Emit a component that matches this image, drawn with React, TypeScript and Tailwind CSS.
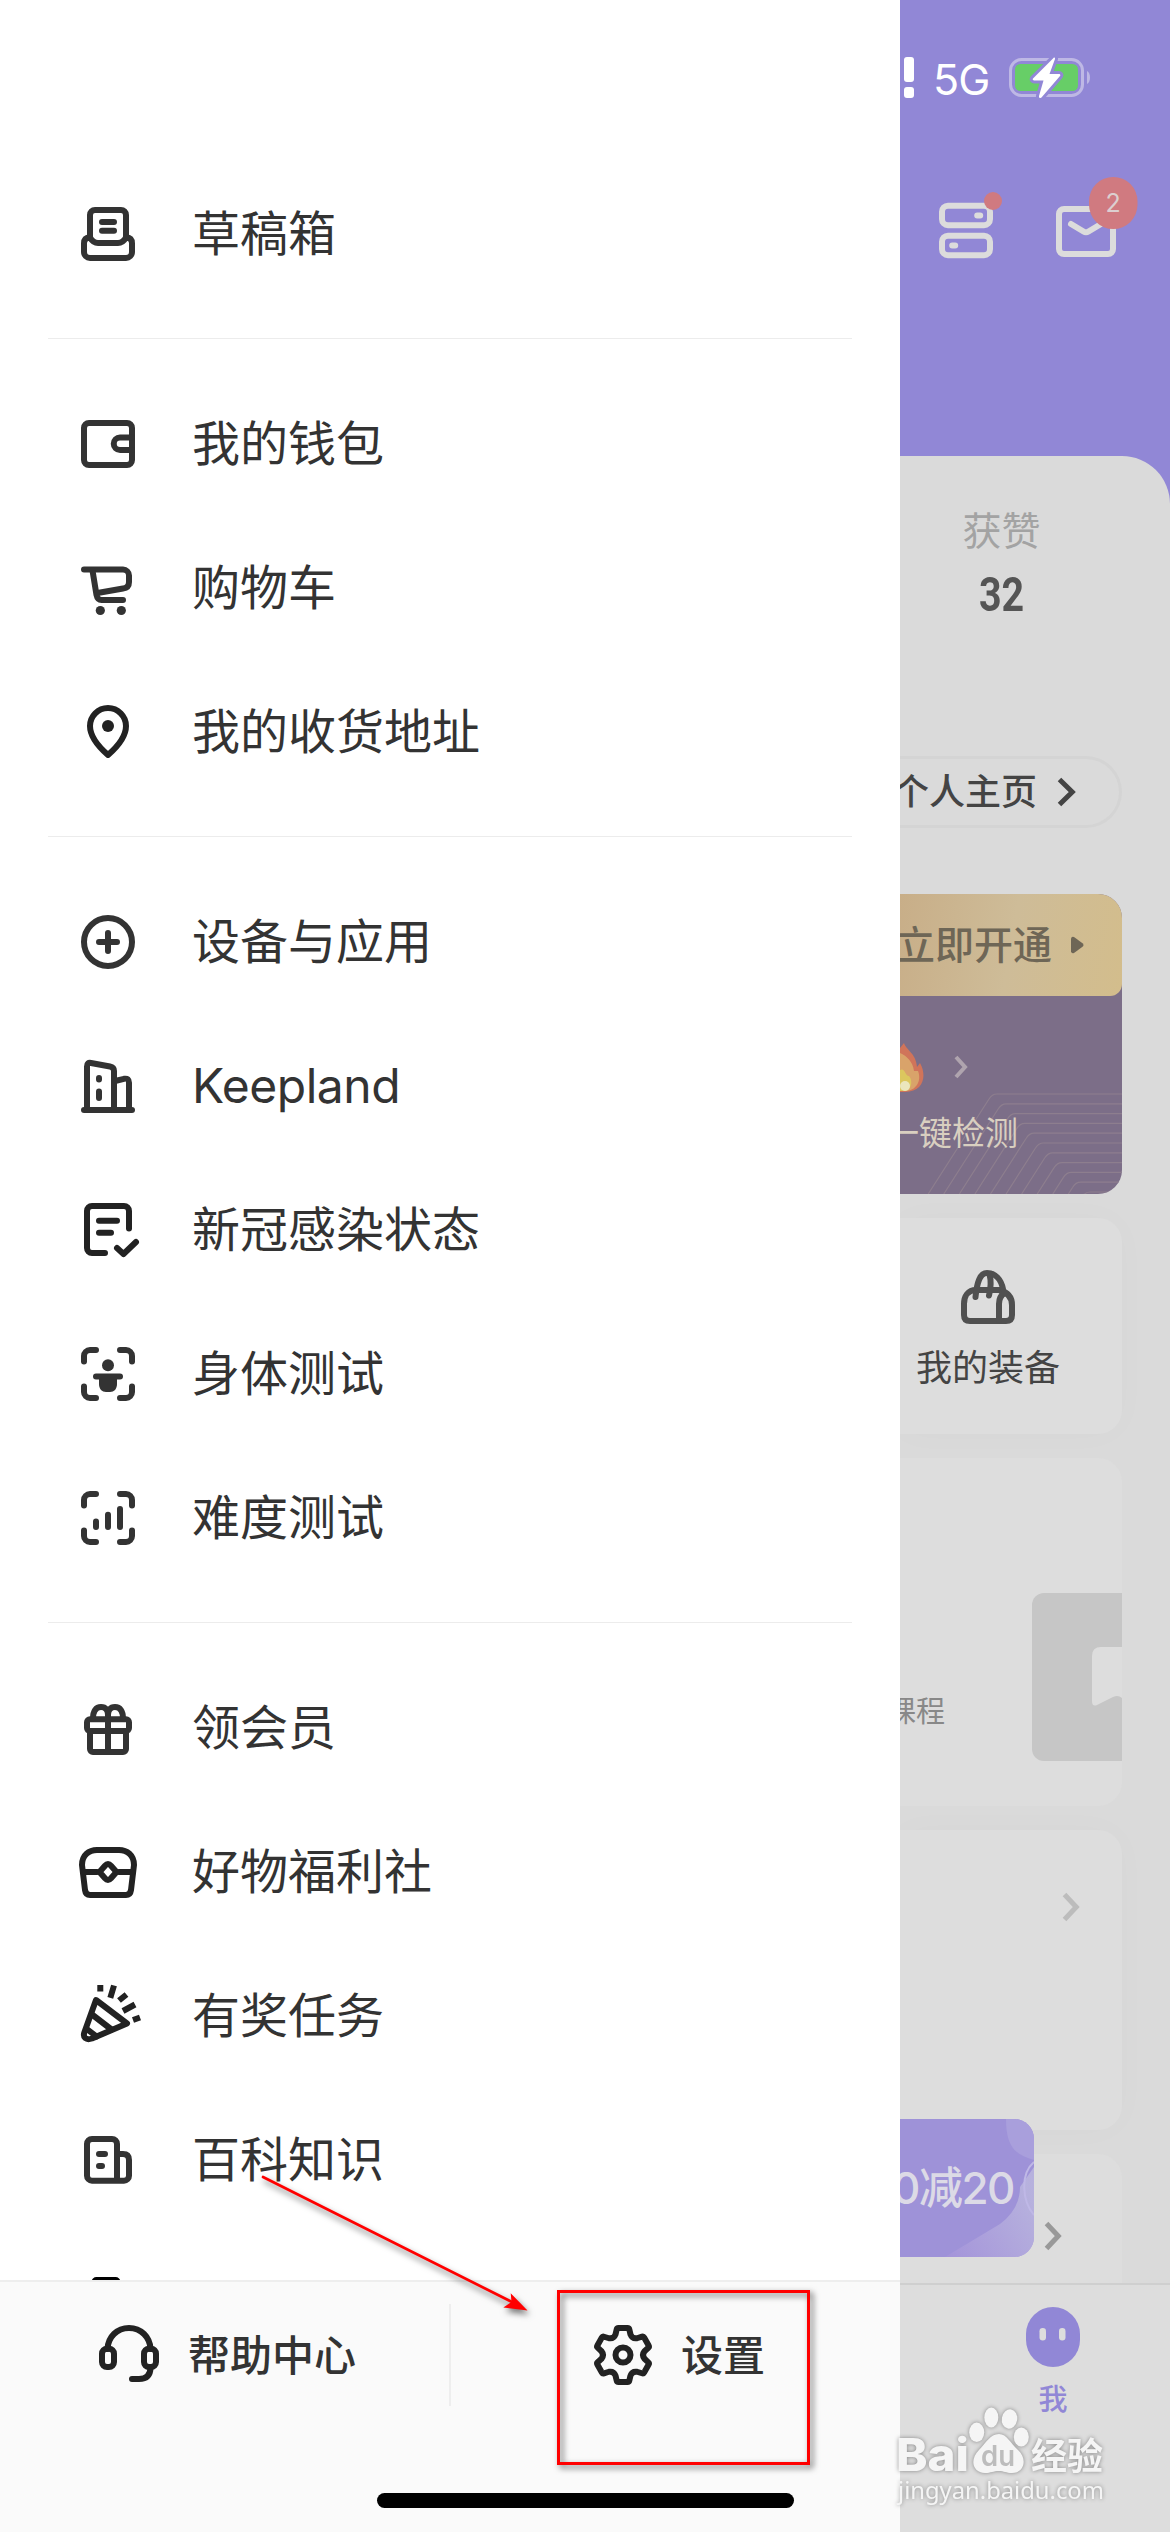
import React from "react";

type IconProps = { children: React.ReactNode; color?: string };

function Icon({ children, color = "#333333" }: IconProps) {
  return (
    <svg
      viewBox="0 0 72 72"
      className="size-[72px] shrink-0"
      fill="none"
      stroke={color}
      strokeWidth={6}
      strokeLinecap="round"
      strokeLinejoin="round"
    >
      {children}
    </svg>
  );
}

const DraftIcon = () => (
  <Icon>
    <path d="M18 40V17a5 5 0 0 1 5-5h26a5 5 0 0 1 5 5v23" />
    <path d="M18 39.500c-4 0-6 2-6 6V54a6 6 0 0 0 6 6h36a6 6 0 0 0 6-6v-8.500c0-4-2-6-6-6-2 3.500-5 5.500-8 5.500H26c-3 0-6-2-8-5.500z" />
    <path d="M30 24h12M30 32.800h12" />
  </Icon>
);

const WalletIcon = () => (
  <Icon>
    <rect x="12" y="15" width="48" height="42" rx="5" />
    <path d="M60 29.500H48a6.200 6.200 0 0 0 0 12.500h12" />
  </Icon>
);

const CartIcon = () => (
  <Icon>
    <path d="M12 17.500h39a6 6 0 0 1 6 6V30c0 4-2 6-6 6.500L25.500 41" />
    <path d="M20.500 18.500l4 24.500c.7 3.500 2 5 5 5H51" />
    <g fill="#333333" stroke="none">
      <circle cx="28.300" cy="58.500" r="4.600" />
      <circle cx="49.300" cy="58.500" r="4.600" />
    </g>
  </Icon>
);

const PinIcon = () => (
  <Icon color="#222222">
    <path d="M36 59C28 52 18 42 18 30a18 18 0 0 1 36 0c0 12-10 22-18 29z" />
    <circle cx="36" cy="30" r="6" fill="#222222" stroke="none" />
  </Icon>
);

const PlusIcon = () => (
  <Icon>
    <circle cx="36" cy="36" r="24" />
    <path d="M27 36h18M36 27v18" />
  </Icon>
);

const BuildingIcon = () => (
  <Icon>
    <path d="M12 60h48" />
    <path d="M15 60V16.500c0-3 1.500-4 4-3.500l19 3.500c2.700.5 4 2 4 4.500v39" />
    <path d="M43 31l9-2.200c3.500-.6 5 .7 5 4V60" />
    <path d="M27 28v1.500M27 41.500v6.500" />
  </Icon>
);

const ChecklistIcon = () => (
  <Icon color="#222222">
    <path d="M57 34.500V17a5 5 0 0 0-5-5H20a5 5 0 0 0-5 5v37a5 5 0 0 0 5 5h13" />
    <path d="M27 26.700h18M27 38.700h12M45 54l6.500 6L64 48" />
  </Icon>
);

const Brackets = () => (
  <path d="M12 23.500V18a6 6 0 0 1 6-6h6M48 12h6a6 6 0 0 1 6 6v5.500M60 48.500V54a6 6 0 0 1-6 6h-6M24 60h-6a6 6 0 0 1-6-6v-5.500" />
);

const BodyIcon = () => (
  <Icon>
    <Brackets />
    <path d="M24 38.500h24" />
    <path d="M27 39h18v7c0 5-3 8-7 8h-4c-4 0-7-3-7-8z" fill="#333333" stroke="none" />
    <circle cx="36" cy="27.200" r="6" fill="#333333" stroke="none" />
  </Icon>
);

const BarsIcon = () => (
  <Icon>
    <Brackets />
    <path d="M24 39.500V45M36 32.700V45M48 27v18" />
  </Icon>
);

const GiftIcon = () => (
  <Icon>
    <rect x="15" y="27.300" width="42" height="11.700" rx="3" />
    <path d="M18 40v17a3 3 0 0 0 3 3h30a3 3 0 0 0 3-3V40M36 22v38" />
    <path d="M21 26.500C21 19 24 15 29 15s7 3.500 7 8c0-4.500 2-8 7-8s8 4 8 11.500" />
  </Icon>
);

const ChestIcon = () => (
  <Icon color="#222222">
    <path d="M10 29c0-10 7-15 15-15h22c8 0 15 5 15 15l-3 25c-.5 3.500-2 5-5 5H18c-3 0-4.500-1.500-5-5z" />
    <path d="M11 36h14M47 36h14" />
    <path d="M27.500 36l5.500-6.300c2-2.200 4-2.200 6 0l5.500 6.300-5.500 6.300c-2 2.200-4 2.200-6 0z" />
  </Icon>
);

const PartyIcon = () => (
  <Icon color="#222222">
    <path d="M24 20l31 23.500L20 58.500c-6 2-9.500-1-7.500-6.500z" />
    <path d="M20 34.500l19.500 15M15.500 49.500l9 7" />
    <path
      strokeLinecap="butt"
      d="M28.300 5v6.500M38.300 17.800L42 5.500M47 20.500l7.500-6M51 31l12-6.500M61 40l7-2.500"
    />
  </Icon>
);

const NewsIcon = () => (
  <Icon>
    <path d="M45 56.700V20a5 5 0 0 0-5-5H20a5 5 0 0 0-5 5v31.700a5 5 0 0 0 5 5h32a5 5 0 0 0 5-5V36c0-4-2-6-6-6h-5" />
    <path d="M27 30h6M27 42h3" />
  </Icon>
);

const CutIcon = () => (
  <Icon color="#000000">
    <rect x="22.500" y="12" width="23" height="46" rx="2" />
  </Icon>
);

const HeadsetIcon = () => (
  <Icon color="#222222">
    <rect x="9" y="29.700" width="12" height="18.300" rx="5" />
    <rect x="51" y="29.700" width="12" height="18.300" rx="5" />
    <path d="M14.500 30C15 18 24 9 36 9s21 9 21.500 21M57.500 48c0 8-4 12-11.500 12h-7" />
  </Icon>
);

/* Six identical teeth, each rotated 60° around the icon's centre. */
function gearPath() {
  let d = "";
  for (let k = 0; k < 6; k++) {
    const t = (k * Math.PI) / 3;
    const p = (x: number, y: number) =>
      `${(36 + x * Math.cos(t) + y * Math.sin(t)).toFixed(2)} ${(36 + x * Math.sin(t) - y * Math.cos(t)).toFixed(2)}`;
    d += `${k === 0 ? "M" : "L"}${p(-7.5, 20.5)}L${p(-6.3, 25.6)}Q${p(-6, 27)} ${p(-4.5, 27)}L${p(4.5, 27)}Q${p(6, 27)} ${p(6.3, 25.6)}L${p(7.5, 20.5)}Q${p(9.25, 16)} ${p(14, 16.75)}`;
  }
  return d + "Z";
}

const GearIcon = () => (
  <Icon color="#222222">
    <path d={gearPath()} />
    <circle cx="36" cy="36" r="7.500" />
  </Icon>
);

const groups = [
  [{ label: "草稿箱", icon: <DraftIcon /> }],
  [
    { label: "我的钱包", icon: <WalletIcon /> },
    { label: "购物车", icon: <CartIcon /> },
    { label: "我的收货地址", icon: <PinIcon /> },
  ],
  [
    { label: "设备与应用", icon: <PlusIcon /> },
    { label: "Keepland", icon: <BuildingIcon /> },
    { label: "新冠感染状态", icon: <ChecklistIcon /> },
    { label: "身体测试", icon: <BodyIcon /> },
    { label: "难度测试", icon: <BarsIcon /> },
  ],
  [
    { label: "领会员", icon: <GiftIcon /> },
    { label: "好物福利社", icon: <ChestIcon /> },
    { label: "有奖任务", icon: <PartyIcon /> },
    { label: "百科知识", icon: <NewsIcon /> },
    { label: "", icon: <CutIcon /> },
  ],
];

function Drawer() {
  return (
    <aside className="flex h-full w-[900px] shrink-0 flex-col bg-white">
      <nav className="h-[2280px] overflow-hidden pt-[162px]">
        {groups.map((items, g) => (
          <section key={g}>
            {g > 0 && <div className="mx-12 mt-8 mb-[33px] h-px bg-[#ececec]" />}
            {items.map((item, i) => (
              <div key={i} className="flex h-36 items-center gap-12 pl-[72px]">
                {item.icon}
                <span
                  className={
                    item.label === "Keepland"
                      ? "text-[48px] leading-[72px] tracking-[-0.5px] text-[#333333]"
                      : "text-[48px] leading-[72px] text-[#333333]"
                  }
                >
                  {item.label}
                </span>
              </div>
            ))}
          </section>
        ))}
      </nav>
      <footer className="flex h-[252px] items-start border-t-2 border-[#eeeeee] bg-[#fafafa] pt-[22px] text-[42px] font-medium text-[#333333]">
        <div className="flex h-[102px] w-[449px] items-center gap-[23px] pl-[93px]">
          <HeadsetIcon />
          <span>帮助中心</span>
        </div>
        <div className="h-[102px] w-0.5 bg-[#eeeeee]" />
        <div className="flex h-[102px] flex-1 items-center gap-[22px] pl-[136px]">
          <GearIcon />
          <span>设置</span>
        </div>
      </footer>
    </aside>
  );
}

function Chevron({ className, w, h, sw }: { className: string; w: number; h: number; sw: number }) {
  return (
    <svg width={w} height={h} viewBox={`0 0 ${w} ${h}`} className={className} fill="none" stroke="currentColor" strokeWidth={sw}>
      <path d={`M${sw / 2} ${sw / 2}L${w - sw * 0.75} ${h / 2}L${sw / 2} ${h - sw / 2}`} />
    </svg>
  );
}

function TopArea() {
  return (
    <header className="h-[456px] pt-[57px] text-white">
      <div className="flex h-[41px] items-center pl-1">
        <div className="flex flex-col gap-[5px]">
          <div className="h-[25px] w-2.5 rounded-[3px] bg-white" />
          <div className="h-[11px] w-2.5 rounded-[3px] bg-white" />
        </div>
        <span className="mt-[3px] ml-[19px] w-[56px] text-[43px] leading-[41px] tracking-[-1px]">5G</span>
        <svg width="84" height="41" viewBox="0 0 84 41" className="ml-5">
          <rect x="1.500" y="2.500" width="72" height="36" rx="11" fill="none" stroke="#beb8e5" strokeWidth="3" />
          <path d="M78 14c4 1.500 4 11.500 0 13z" fill="#beb8e5" />
          <rect x="6" y="7" width="63" height="27" rx="5.500" fill="#67ce67" />
          <path
            d="M44.500 1L24 21.500c-.7 1 0 2 1 2h9.500L30 39c-.3 1.800 1.500 2.500 2.500 1.500L51 19c.8-1 0-2-1-2H40.500L46 2c.2-1.300-.7-1.800-1.500-1z"
            fill="#ffffff"
            stroke="#9187d6"
            strokeWidth="6"
            paintOrder="stroke"
          />
        </svg>
      </div>
      <svg width="270" height="110" viewBox="0 0 270 110" className="mt-[62px]" fill="none" stroke="#dcdcdc" strokeWidth="6" strokeLinecap="round">
        <rect x="42" y="45.700" width="48" height="19.500" rx="6" />
        <rect x="42" y="75.700" width="48" height="19.500" rx="6" />
        <path d="M77.200 55.500h3M52.200 85.500h3" />
        <circle cx="93" cy="41" r="9" fill="#d07a80" stroke="none" />
        <rect x="159" y="49" width="54" height="45" rx="5" />
        <path d="M171 64l12.500 7.500q2.500 1.500 5 0L201 64" />
        <rect x="189" y="17" width="48.500" height="52" rx="24.200" fill="#d07a80" stroke="none" />
        <text x="213" y="52" textAnchor="middle" fill="#dccfd0" stroke="none" className="text-[25px]">
          2
        </text>
      </svg>
    </header>
  );
}

function VipCard() {
  return (
    <div className="mt-[66px] flex h-[300px] w-[222px] flex-col overflow-hidden rounded-r-3xl bg-[#7c6e88]">
      <div className="flex h-[102px] items-center justify-end gap-[19px] rounded-br-xl bg-linear-[100deg,#c8ae88_0%,#cebc98_50%,#d3bd8c_100%] pr-[38px]">
        <span className="shrink-0 text-[39px] font-medium text-[#6e6656]">立即开通</span>
        <svg width="13" height="18" viewBox="0 0 13 18" className="shrink-0" fill="#6e6656">
          <path d="M0 2.500Q.5 0 3 1L11.500 7.200Q13.500 9 11.500 10.800L3 17Q.5 18 0 15.500Z" />
        </svg>
      </div>
      <div className="relative h-[198px]">
        <svg width="222" height="198" viewBox="0 0 222 198" className="absolute inset-0" fill="none" stroke="#8d7e8e" strokeWidth="1.200">
          {Array.from({ length: 11 }, (_, i) => {
            const y = 98 + i * 9.8;
            const x = 97 + i * 9.3;
            const drop = 198 - y - 5;
            return <path key={i} d={`M222 ${y}H${x}Q${x - 5} ${y} ${x - 8} ${y + 5}L${x - 8 - drop * 0.64} 198`} />;
          })}
        </svg>
        <div className="relative flex h-[73px] items-end pt-6">
          <svg width="24" height="50" viewBox="0 0 24 50" className="mb-[-24px]">
            <path d="M0 5L4 0C6 7 16 10 17 24L20 20C27 32 24 49 5 49H0Z" fill="#d0745a" />
            <path d="M0 10C7 13 13 19 14 28L18 28C22 38 16 48 5 48H0Z" fill="#d9a36a" />
            <path d="M0 27C5 24 5 33 9 33C14 39 10 48 5 48H0Z" fill="#dcc75e" />
            <ellipse cx="5" cy="43" rx="5" ry="5" fill="#ebe6bd" />
          </svg>
          <Chevron w={14} h={24} sw={4} className="mb-[-10px] ml-[30px] text-[#afa4ae]" />
        </div>
        <div className="relative mt-[39px] flex justify-end pr-[104px]">
          <span className="shrink-0 text-[33px] leading-[50px] whitespace-nowrap text-[#d9cfc0]">一键检测</span>
        </div>
      </div>
    </div>
  );
}

function Cards() {
  return (
    <div className="relative mt-6 flex flex-col gap-6">
      <div className="flex h-[216px] w-[222px] flex-col items-center rounded-r-3xl bg-[#dddddd] pt-[52px] pr-[46px] shadow-[0_0_36px_rgba(0,0,0,0.02)]">
        <svg width="54" height="54" viewBox="0 0 54 54" fill="none" stroke="#505050" strokeWidth="6" strokeLinecap="round" strokeLinejoin="round">
          <path d="M15 20h23c8 2 13 6 13 15v10c0 4-2 6-6 6H9c-4 0-6-2-6-6V34c0-8 4-14 12-14z" />
          <path d="M14.500 27C16 12 19 3 26 3c8 0 14 6 16 16" />
          <path d="M28 25.500C30 18 30 10 28.500 4M38 50V34c0-5 2-9 6-11" />
        </svg>
        <span className="mt-[17px] text-[36px] leading-[54px] text-[#444444]">我的装备</span>
      </div>
      <div className="flex h-[348px] w-[222px] items-start justify-end gap-[87px] overflow-hidden rounded-r-3xl bg-[#dddddd]">
        <span className="mt-[232px] shrink-0 text-[29px] leading-[44px] text-[#888888]">课程</span>
        <div className="mt-[135px] h-[168px] w-[90px] shrink-0 rounded-l-xl bg-[#c6c6c6]">
          <svg width="90" height="168" viewBox="0 0 90 168" fill="#dddddd">
            <path d="M90 54H69q-9 0-9 9v45q0 6 5 4l16-8q5-2.500 9 1z" />
          </svg>
        </div>
      </div>
      <div className="flex h-[300px] w-[222px] justify-end rounded-r-3xl bg-[#dddddd] pt-[62px] pr-[42px] shadow-[0_0_36px_rgba(0,0,0,0.02)]">
        <Chevron w={18} h={30} sw={5} className="text-[#bcbcbc]" />
      </div>
      <div className="flex h-[129px] w-[222px] justify-end rounded-tr-3xl bg-[#dddddd] pt-[67px] pr-[60px]">
        <Chevron w={18} h={30} sw={5} className="text-[#999999]" />
      </div>
      <div className="absolute top-[901px] left-0 flex h-[138px] w-[134px] items-center justify-end overflow-hidden rounded-r-[20px] bg-[#9e92d8] pr-[20px]">
        <svg width="134" height="138" viewBox="0 0 134 138" className="absolute inset-0">
          <defs>
            <linearGradient id="glow" x1="0" y1="1" x2="1" y2="0.400">
              <stop offset="0" stopColor="#a594da" />
              <stop offset="1" stopColor="#bdb9df" />
            </linearGradient>
          </defs>
          <path d="M106 0C106 26 114 36 134 41V0Z" fill="#a99fdc" />
          <path d="M45 138L100 105Q120 90 120 68L134 48V138Z" fill="url(#glow)" opacity="0.800" />
          <path d="M134 43C120 55 122 82 134 96" fill="none" stroke="#bfb8e6" strokeWidth="2" />
        </svg>
        <span className="relative shrink-0 text-[44px] font-medium tracking-[-1.500px] whitespace-nowrap text-[#dcdae6]">0减20</span>
      </div>
    </div>
  );
}

function ProfilePage() {
  return (
    <main className="flex h-full w-[270px] shrink-0 flex-col overflow-hidden bg-[#9187d6]">
      <TopArea />
      <div className="h-[1827px] shrink-0 overflow-hidden rounded-tr-[48px] bg-[#dadada]">
        <div className="flex flex-col items-center pt-[46px] pr-[67px]">
          <div className="text-[39px] leading-[58px] text-[#a3a3a3]">获赞</div>
          <div className="mt-[5px] scale-x-[0.82] font-['Roboto'] text-[48px] leading-[60px] font-bold text-[#555555]">32</div>
        </div>
        <div className="mt-[131px] flex h-[72px] w-[222px] items-center justify-end gap-[20px] rounded-r-full border-[3px] border-l-0 border-[#d4d4d4] pr-[43px]">
          <span className="shrink-0 text-[36px] font-medium text-[#444444]">个人主页</span>
          <Chevron w={19} h={30} sw={5} className="shrink-0 text-[#444444]" />
        </div>
        <VipCard />
        <Cards />
      </div>
      <nav className="flex h-[249px] flex-col items-center border-t-2 border-[#cfcfcf] bg-[#dddddd] pt-[22px] pl-9">
        <svg width="54" height="60" viewBox="0 0 54 60">
          <rect width="54" height="60" rx="27" fill="#9187d6" />
          <rect x="13.500" y="21" width="6.500" height="12.500" rx="3.200" fill="#dddddd" />
          <rect x="33" y="21" width="6.500" height="12.500" rx="3.200" fill="#dddddd" />
        </svg>
        <span className="mt-[11px] text-[29px] leading-[44px] font-medium text-[#9187d6]">我</span>
      </nav>
    </main>
  );
}

function Watermark() {
  return (
    <svg
      width="220"
      height="120"
      viewBox="0 0 220 120"
      className="absolute top-[2400px] left-[892px] drop-shadow-[0_0_2px_rgba(0,0,0,0.4)]"
      fill="#f5f5f5"
    >
      <text x="4" y="71" textLength="73" lengthAdjust="spacingAndGlyphs" className="font-['Inter'] text-[45px] font-extrabold">
        Bai
      </text>
      <ellipse cx="84.700" cy="32.300" rx="7.500" ry="9.700" />
      <ellipse cx="99.300" cy="17.500" rx="7" ry="10" />
      <ellipse cx="117.500" cy="19" rx="7.700" ry="9.700" transform="rotate(10 117.500 19)" />
      <ellipse cx="129.300" cy="37" rx="7.500" ry="9.500" />
      <path d="M107 34C115 34 118 43 126 50C136 59 132 73 120 73C114 73 112 71 107 71C101 71 99 73 93 73C81 73 77 60 87 50C94 43 98 34 107 34Z" />
      <text x="89" y="66" textLength="34" lengthAdjust="spacingAndGlyphs" fill="#bdbdbd" className="font-['Inter'] text-[29px] font-semibold">
        du
      </text>
      <text x="139" y="70" textLength="72" lengthAdjust="spacingAndGlyphs" className="text-[37px] font-bold">
        经验
      </text>
      <text x="6" y="98.500" textLength="206" lengthAdjust="spacingAndGlyphs" className="font-['Noto_Sans'] text-[24px]">
        jingyan.baidu.com
      </text>
    </svg>
  );
}

export default function App() {
  return (
    <div className="relative flex h-[2532px] w-[1170px] overflow-hidden bg-white font-['Inter','Noto_Sans_CJK_SC',sans-serif]">
      <Drawer />
      <ProfilePage />
      <div className="absolute top-[2493px] left-[377px] h-[15px] w-[417px] rounded-full bg-black" />
      <div className="absolute top-[2290px] left-[557px] h-[175px] w-[253px] border-[3px] border-[#ff0000] drop-shadow-[3px_3px_3px_rgba(0,0,0,0.6)]" />
      <svg
        width="290"
        height="150"
        viewBox="0 0 290 150"
        className="absolute top-[2170px] left-[250px] drop-shadow-[2px_4px_3px_rgba(0,0,0,0.55)]"
      >
        <path d="M13 7L264 133" stroke="#ff0000" strokeWidth="2.700" strokeLinecap="round" />
        <path d="M277.500 140.500L260.700 123.300L261.500 132L253.300 137.500Z" fill="#ff0000" />
      </svg>
      <Watermark />
    </div>
  );
}
